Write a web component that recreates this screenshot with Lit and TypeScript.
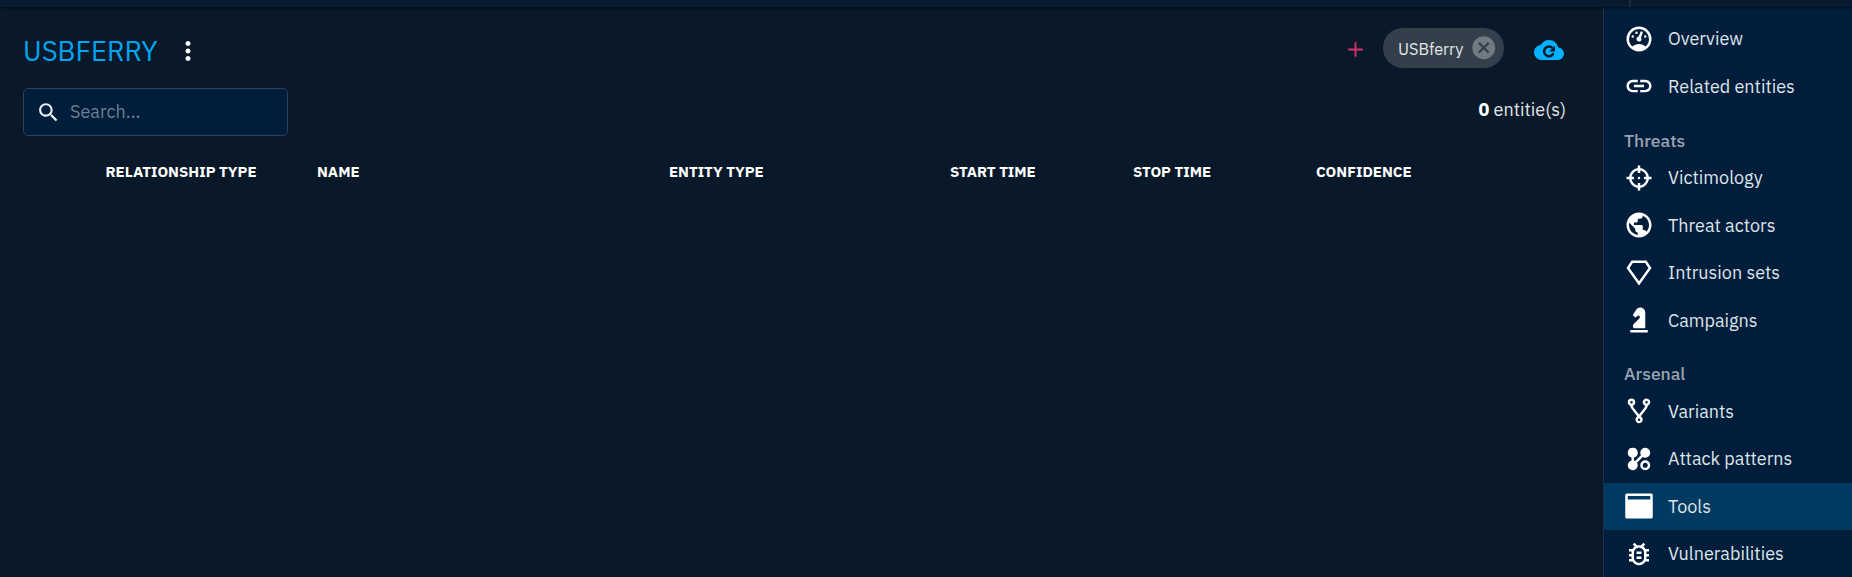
import { LitElement, html, css, svg } from "lit";
import { customElement } from "lit/decorators.js";

const ICONS: Record<string, any> = {
  more: svg`<path d="M12 8c1.1 0 2-.9 2-2s-.9-2-2-2-2 .9-2 2 .9 2 2 2zm0 2c-1.1 0-2 .9-2 2s.9 2 2 2 2-.9 2-2-.9-2-2-2zm0 6c-1.1 0-2 .9-2 2s.9 2 2 2 2-.9 2-2-.9-2-2-2z"/>`,
  search: svg`<path d="M15.5 14h-.79l-.28-.27C15.41 12.59 16 11.11 16 9.5 16 5.91 13.09 3 9.5 3S3 5.91 3 9.5 5.91 16 9.5 16c1.61 0 3.09-.59 4.23-1.57l.27.28v.79l5 4.99L20.49 19l-4.99-5zm-6 0C7.01 14 5 11.99 5 9.5S7.01 5 9.5 5 14 7.01 14 9.5 11.99 14 9.5 14z"/>`,
  add: svg`<path d="M19 12.9h-6.1V19h-1.8v-6.1H5v-1.8h6.1V5h1.8v6.1H19z"/>`,
  cancel: svg`<path d="M12 2C6.47 2 2 6.47 2 12s4.47 10 10 10 10-4.47 10-10S17.53 2 12 2zm5 13.59L15.59 17 12 13.41 8.41 17 7 15.59 10.59 12 7 8.41 8.41 7 12 10.59 15.59 7 17 8.41 13.41 12 17 15.59z"/>`,
  cloud: svg`<path d="M12 4c3.64 0 6.67 2.59 7.35 6.04C21.95 10.22 24 12.36 24 15a5 5 0 0 1-5 5H6a6 6 0 0 1-6-6c0-3.09 2.34-5.64 5.35-5.96C6.6 5.64 9.11 4 12 4Z"/><path class="cut" d="M14.8 10.3A3.9 3.9 0 1 0 15.6 14.6"/><path class="arrow" d="M16.8 8.500v4.700h-4.700z"/>`,
  gauge: svg`<path d="M12 2A10 10 0 0 0 2 12a10 10 0 0 0 10 10 10 10 0 0 0 10-10A10 10 0 0 0 12 2m0 2a8 8 0 0 1 8 8c0 2.400-1 4.500-2.700 6-1.400-1.300-3.300-2-5.300-2s-3.800.7-5.300 2C5 16.500 4 14.400 4 12a8 8 0 0 1 8-8m2 1.890c-.38.010-.74.260-.9.650l-1.290 3.230-.1.230c-.71.130-1.300.6-1.570 1.260-.41 1.030.09 2.190 1.120 2.600 1.030.41 2.190-.09 2.600-1.120.26-.66.140-1.420-.29-1.980l.1-.26 1.290-3.210.010-.030c.2-.51-.05-1.090-.56-1.300-.13-.05-.26-.07-.41-.07M10 6a1 1 0 0 0-1 1 1 1 0 0 0 1 1 1 1 0 0 0 1-1 1 1 0 0 0-1-1M7 9a1 1 0 0 0-1 1 1 1 0 0 0 1 1 1 1 0 0 0 1-1 1 1 0 0 0-1-1m10 0a1 1 0 0 0-1 1 1 1 0 0 0 1 1 1 1 0 0 0 1-1 1 1 0 0 0-1-1Z"/>`,
  link: svg`<path d="M3.9 12c0-1.71 1.39-3.1 3.1-3.1h4V7H7c-2.76 0-5 2.24-5 5s2.24 5 5 5h4v-1.9H7c-1.71 0-3.1-1.39-3.1-3.1zM8 13h8v-2H8v2zm9-6h-4v1.9h4c1.71 0 3.1 1.39 3.1 3.1s-1.39 3.1-3.1 3.1h-4V17h4c2.76 0 5-2.24 5-5s-2.24-5-5-5z"/>`,
  target: svg`<path d="M11 2v2.070A8 8 0 0 0 4.070 11H2v2h2.070A8 8 0 0 0 11 19.930V22h2v-2.070A8 8 0 0 0 19.930 13H22v-2h-2.070A8 8 0 0 0 13 4.070V2m-2 4.080V8h2V6.090c2.500.41 4.500 2.410 4.920 4.910H16v2h1.910c-.41 2.500-2.410 4.500-4.910 4.920V16h-2v1.910C8.500 17.500 6.500 15.500 6.080 13H8v-2H6.090C6.500 8.500 8.500 6.500 11 6.080M12 11a1 1 0 1 0 0 2 1 1 0 0 0 0-2z"/>`,
  globe: svg`<path d="M12 2C6.48 2 2 6.48 2 12s4.48 10 10 10 10-4.48 10-10S17.52 2 12 2zm-1 17.93c-3.95-.49-7-3.85-7-7.93 0-.62.08-1.21.21-1.79L9 15v1c0 1.1.9 2 2 2v1.93zm6.9-2.54c-.26-.81-1-1.39-1.9-1.39h-1v-3c0-.55-.45-1-1-1H8v-2h2c.55 0 1-.45 1-1V7h2c1.1 0 2-.9 2-2v-.41c2.93 1.19 5 4.06 5 7.41 0 2.08-.8 3.97-2.1 5.39z"/>`,
  diamond: svg`<path d="M6 2 2 8l10 14L22 8l-4-6H6m1.1 2h9.8l2.7 4L12 18.600 4.400 8z"/>`,
  knight: svg`<path d="M19 22H5v-2h14v2M13 2c-1.250 0-2.420.62-3.110 1.660L7 8l2 2 2.060-1.370c.44-.31 1.080-.19 1.390.25.020.04.050.080.070.12.300.6.180 1.300-.29 1.770l-4.460 4.460c-.89.88-.89 2.310 0 3.200.080.080.150.160.230.170H17V6a4 4 0 0 0-4-4Z"/>`,
  fork: svg`<path d="M6 2a3 3 0 0 0-3 3c0 1.280.81 2.400 2 2.820.020 1.200.8 2.180 1.570 3.180l3.430 4.400c.3.450.5.8.5 1.050A2.900 2.900 0 1 0 15 19c0-1.100-.6-2.050-1.500-2.550 0-.3.200-.7.5-1.100l3.500-4.350c.8-1 1.480-2 1.500-3.180A3 3 0 1 0 16.900 7.800c-.1.700-.4 1.400-.9 2L12 14.800 8 9.800c-.5-.6-.8-1.300-.9-2A3 3 0 0 0 6 2m0 2a1 1 0 1 1 0 2 1 1 0 0 1 0-2m12 0a1 1 0 1 1 0 2 1 1 0 0 1 0-2m-6 14a1 1 0 1 1 0 2 1 1 0 0 1 0-2z"/>`,
  pattern: svg`<path fill-rule="evenodd" d="M7 3a4 4 0 0 1 1 7.870v2.260c.370.090.700.240 1.020.420l4.530-4.530A4 4 0 1 1 17 11c-.700 0-1.400-.200-2-.530L10.470 15A4 4 0 1 1 6 13.130v-2.260A4 4 0 0 1 7 3m10 10a4 4 0 1 1 0 8 4 4 0 0 1 0-8m0 2a2 2 0 1 0 0 4 2 2 0 0 0 0-4"/>`,
  window: svg`<path fill-rule="evenodd" d="M2.200 2h19.600A1.200 1.200 0 0 1 23 3.200v17.600a1.200 1.200 0 0 1-1.200 1.200H2.200A1.200 1.200 0 0 1 1 20.800V3.200A1.200 1.200 0 0 1 2.200 2M3 4v2.800h18V4z"/>`,
  bug: svg`<path d="M20 8h-2.81c-.45-.78-1.07-1.45-1.82-1.96L17 4.41 15.59 3l-2.17 2.17C12.96 5.06 12.49 5 12 5s-.96.06-1.41.17L8.41 3 7 4.41l1.62 1.63C7.88 6.55 7.26 7.22 6.81 8H4v2h2.09c-.05.33-.09.66-.09 1v1H4v2h2v1c0 .34.04.67.09 1H4v2h2.81c1.04 1.79 2.97 3 5.19 3s4.15-1.21 5.19-3H20v-2h-2.09c.05-.33.09-.66.09-1v-1h2v-2h-2v-1c0-.34-.04-.67-.09-1H20V8zm-4 4v3c0 2.21-1.79 4-4 4s-4-1.79-4-4v-4c0-2.21 1.79-4 4-4s4 1.79 4 4v1zm-6-2h4v2h-4zm0 4h4v2h-4z"/>`,
};

const icon = (name: string, cls = "icon") =>
  html`<svg class=${cls} viewBox="0 0 24 24">${ICONS[name]}</svg>`;

const COLUMNS = ["Relationship type", "Name", "Entity type", "Start time", "Stop time", "Confidence"];

const GROUPS = [
  { title: "", items: [["gauge", "Overview"], ["link", "Related entities"]] },
  { title: "Threats", items: [["target", "Victimology"], ["globe", "Threat actors"], ["diamond", "Intrusion sets"], ["knight", "Campaigns"]] },
  { title: "Arsenal", items: [["fork", "Variants"], ["pattern", "Attack patterns"], ["window", "Tools"], ["bug", "Vulnerabilities"]] },
];

@customElement("app-root")
export class AppRoot extends LitElement {
  static styles = css`
    :host { display: flex; flex-direction: column; width: 100%; height: 577px; overflow: hidden; background: #0a1929; color: #fff; font-family: "IBM Plex Sans", Roboto, sans-serif; }
    * { box-sizing: border-box; }
    svg { display: block; fill: currentColor; flex: none; }
    .icon { width: 30px; height: 30px; }
    .bar { display: flex; height: 7px; flex: none; background: #071a30; box-shadow: 0 1px 3px rgba(0,0,0,.6); z-index: 1; }
    .bar-main { width: 1631px; border-right: 2px solid #1b2d40; }
    .body { display: flex; flex: 1; min-height: 0; }
    main { flex: 1; min-width: 0; }
    .head { display: flex; align-items: center; height: 80px; padding: 8px 0 0 23px; }
    h1 { margin: 0; font-size: 27.500px; font-weight: 400; line-height: 36px; color: #00a5f2; width: 134px; white-space: nowrap; }
    .more { width: 30px; height: 30px; margin-left: 16px; }
    .tools { display: flex; align-items: center; margin-left: auto; margin-right: 39px; height: 42px; margin-top: -6px; }
    .add { width: 25px; height: 25px; color: #d6336c; margin: 2px 15px 0 0; }
    .chip { display: flex; align-items: center; height: 40px; width: 121px; border-radius: 20px; background: #343f4c; padding-left: 15px; font-size: 16.25px; color: #e4e6e9; }
    .chip-text { width: 72px; }
    .cancel { width: 27.500px; height: 27.500px; color: #717983; }
    .cloud { width: 30px; height: 30px; color: #00b1ff; margin: 3px 0 0 30px; }
    .cut { fill: none; stroke: #0a1929; stroke-width: 2; }
    .arrow { fill: #0a1929; }
    .filter { display: flex; justify-content: space-between; height: 49px; padding: 0 37px 0 23px; margin-top: 1px; }
    .search { display: flex; align-items: center; width: 265px; height: 48px; border: 1px solid #2d435c; border-radius: 5px; background: #001e3c; padding-left: 12px; font-size: 18px; color: #6d7e90; }
    .search-icon { width: 25px; height: 25px; color: #eef0f2; margin-right: 9px; }
    .ph { line-height: 24px; padding-bottom: 1px; }
    .count { font-size: 18px; line-height: 24px; margin-top: 10px; color: #e3e5e8; white-space: nowrap; }
    .count b { color: #fff; }
    .cols { display: grid; grid-template-columns: 211.500px 352px 281px 183px 183px 1fr; padding-left: 105.500px; margin-top: 25px; font-size: 15px; font-weight: 700; line-height: 20px; text-transform: uppercase; white-space: nowrap; }
    aside { width: 249px; flex: none; background: #001e3c; border-left: 1px solid #1b344f; padding-top: 8px; }
    .item { display: flex; align-items: center; height: 47.500px; padding-left: 20px; }
    .item .icon { margin-right: 14px; }
    .item-text { font-size: 18px; color: #dfe4e9; white-space: nowrap; }
    .active { background: #003a60; }
    .group { height: 43.750px; padding: 18.500px 0 0 20px; font-size: 17.500px; font-weight: 500; line-height: 24px; color: #99a5b1; }
  `;

  render() {
    return html`
      <div class="bar"><div class="bar-main"></div></div>
      <div class="body">
        <main>
          <div class="head">
            <h1>USBFERRY</h1>
            ${icon("more", "more")}
            <div class="tools">
              ${icon("add", "add")}
              <div class="chip"><span class="chip-text">USBferry</span>${icon("cancel", "cancel")}</div>
              ${icon("cloud", "cloud")}
            </div>
          </div>
          <div class="filter">
            <div class="search">${icon("search", "search-icon")}<span class="ph">Search...</span></div>
            <div class="count"><b>0</b> entitie(s)</div>
          </div>
          <div class="cols">${COLUMNS.map((t) => html`<span>${t}</span>`)}</div>
        </main>
        <aside>
          ${GROUPS.map((g) => html`
            ${g.title ? html`<div class="group">${g.title}</div>` : ""}
            ${g.items.map(([i, t]) => html`<div class="item ${t === "Tools" ? "active" : ""}">${icon(i)}<span class="item-text">${t}</span></div>`)}
          `)}
        </aside>
      </div>`;
  }
}
